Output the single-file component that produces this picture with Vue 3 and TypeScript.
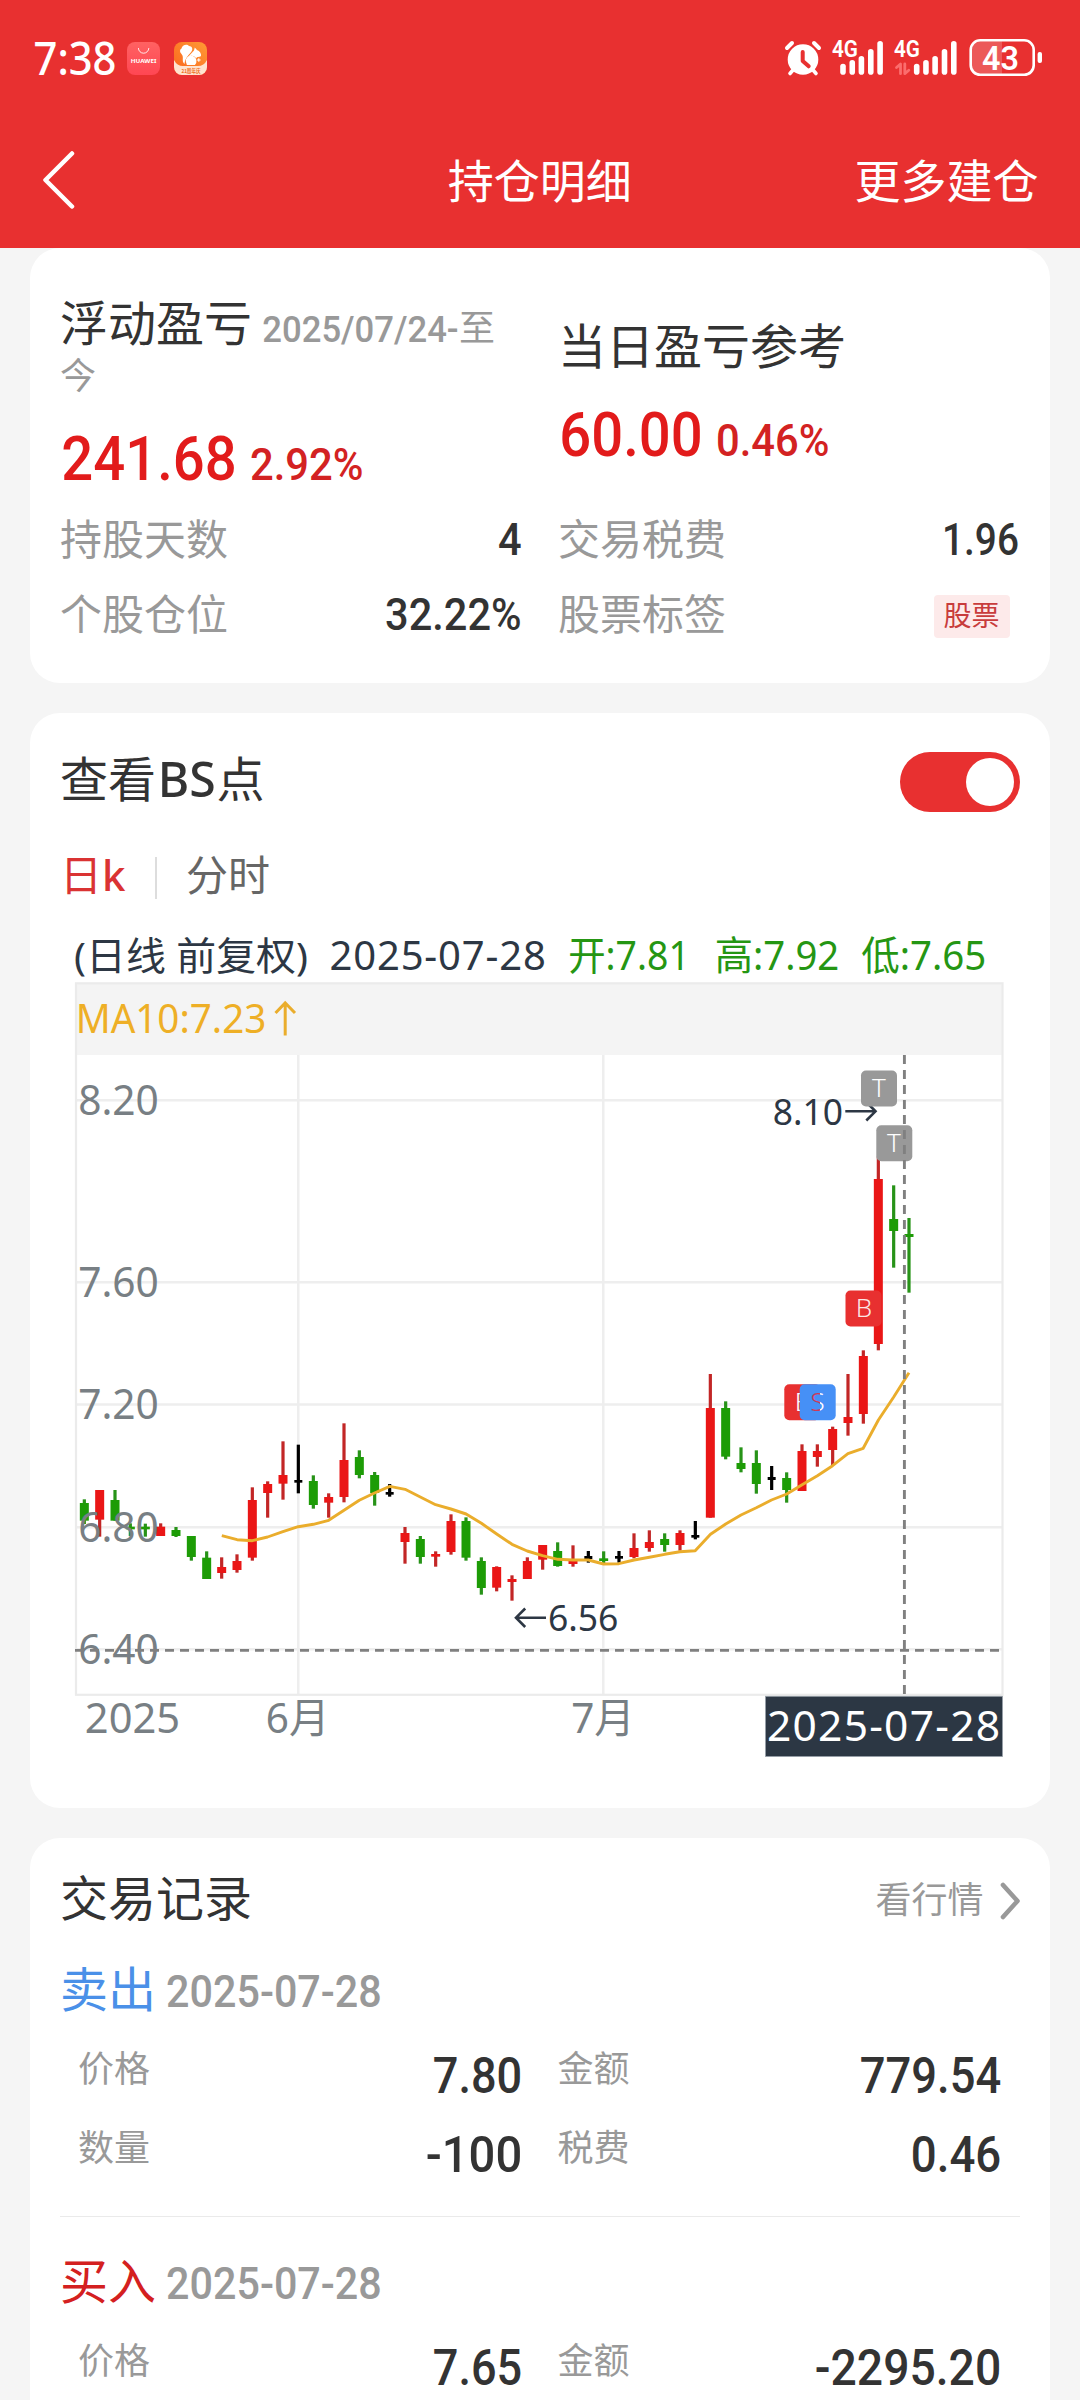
<script setup lang="ts">
import { h } from 'vue'
import type { FunctionalComponent } from 'vue'

interface FitProps {
  t: string
  w: number
  cap: number
  weight?: number
  family?: string
}

// Single-line text set to an exact ink width and cap height
const Fit: FunctionalComponent<FitProps> = (p) => {
  const size = p.cap / 0.711
  const b = size * 0.045
  return h(
    'svg',
    { width: p.w, height: p.cap, style: 'display:block;overflow:visible;flex:none' },
    [
      h(
        'text',
        {
          x: -b,
          y: p.cap,
          textLength: p.w + b * 2,
          lengthAdjust: 'spacingAndGlyphs',
          fill: 'currentColor',
          'font-size': size,
          'font-weight': p.weight ?? 500,
          'font-family': p.family ?? 'Roboto, "Noto Sans", sans-serif',
        },
        p.t,
      ),
    ],
  )
}
Fit.props = ['t', 'w', 'cap', 'weight', 'family']

const NOTO = '"Noto Sans", "Noto Sans CJK SC", sans-serif'

type Tone = 'r' | 'g' | 'k'
const tones: Record<Tone, { body: string; wick: string }> = {
  r: { body: '#ea1616', wick: '#c22626' },
  g: { body: '#1d9c06', wick: '#279318' },
  k: { body: '#000', wick: '#000' },
}

// [tone, high, body top, body bottom, low] in thirds of a pixel from y = 1400
const raw: [Tone, number, number, number, number][] = [
  ['g', 298, 309, 362, 372], ['r', 270, 270, 359, 410], ['g', 270, 300, 362, 362],
  ['g', 370, 380, 388, 408], ['g', 371, 380, 388, 410], ['r', 370, 380, 408, 408],
  ['g', 381, 390, 408, 411], ['g', 408, 408, 471, 482], ['g', 454, 473, 537, 537],
  ['r', 472, 501, 519, 536], ['r', 463, 483, 510, 518], ['r', 262, 300, 473, 482],
  ['r', 244, 252, 279, 353], ['r', 124, 225, 251, 299], ['k', 134, 240, 248, 280],
  ['g', 226, 243, 315, 326], ['r', 280, 291, 308, 353], ['r', 70, 180, 291, 307],
  ['g', 151, 171, 225, 235], ['g', 216, 225, 279, 317], ['k', 252, 276, 284, 290],
  ['r', 381, 399, 426, 491], ['g', 408, 417, 471, 491], ['r', 454, 462, 470, 500],
  ['r', 343, 363, 456, 464], ['g', 352, 363, 473, 482], ['g', 472, 483, 564, 584],
  ['r', 499, 501, 563, 574], ['r', 526, 537, 546, 602], ['r', 472, 483, 537, 537],
  ['r', 435, 435, 479, 509], ['g', 427, 453, 498, 500], ['r', 436, 479, 492, 500],
  ['k', 453, 468, 477, 488], ['g', 454, 475, 483, 490], ['k', 453, 468, 476, 488],
  ['r', 400, 444, 471, 475], ['r', 391, 426, 444, 455], ['g', 400, 417, 435, 455],
  ['r', 391, 399, 435, 452], ['k', 363, 405, 413, 418], ['r', -78, 24, 353, 353],
  ['g', 4, 24, 170, 178], ['g', 142, 189, 207, 217], ['g', 151, 189, 252, 281],
  ['k', 198, 231, 240, 270], ['g', 217, 234, 270, 308], ['r', 133, 153, 273, 273],
  ['r', 133, 153, 171, 200], ['r', 80, 87, 150, 195], ['r', -78, 51, 69, 107],
  ['r', -149, -132, 42, 71], ['r', -730, -663, -168, -149], ['g', -644, -543, -507, -397],
  ['g', -546, -498, -489, -322],
]
const xAt = (i: number) => 84.4 + i * 15.27
const yAt = (v: number) => 1400 + v / 3
const candles = raw.map(([tone, hi, top, bot, lo], i) => ({
  x: Math.round(xAt(i) * 3) / 3,
  hi: yAt(hi),
  top: yAt(top),
  bot: yAt(bot),
  lo: yAt(lo),
  bw: tone === 'k' ? 8 : 9,
  ...tones[tone],
}))

const ma = [
  407, 419, 422, 411, 395, 380, 373, 361, 331, 301, 279, 259, 268, 291, 314, 327, 342, 370, 402,
  433, 453, 467, 478, 480, 480, 492, 491, 480, 472, 463, 455, 452, 403, 372, 345, 323, 300, 282,
  254, 227, 197, 161, 145, 60, -9, -82,
]
const maPoints = ma.map((v, i) => `${xAt(i + 9).toFixed(1)},${yAt(v).toFixed(1)}`).join(' ')

const gridY = [1100.3, 1282.3, 1404.5, 1527.3, 1649.3]

interface Label {
  t: string
  x: number
  y: number
  w: number
  size: number
  fill: string
  pad?: number
  adjust?: 'spacing'
}
const ink = '#2d3744'
const green = '#259613'
const grey = '#787f84'
const labels: Label[] = [
  { t: '(日线 前复权)', x: 77, y: 970, w: 228, size: 39, fill: ink, pad: 3 },
  { t: '2025-07-28', x: 331.3, y: 970, w: 212.7, size: 40, fill: ink, adjust: 'spacing' },
  { t: '开:7.81', x: 570, y: 970, w: 118, size: 40, fill: green },
  { t: '高:7.92', x: 716.5, y: 970, w: 121, size: 40, fill: green },
  { t: '低:7.65', x: 863, y: 970, w: 121.5, size: 40, fill: green },
  { t: 'MA10:7.23', x: 77.5, y: 1033, w: 187, size: 40.5, fill: '#eeaf26' },
  { t: '8.20', x: 80, y: 1114.6, w: 77, size: 41, fill: grey },
  { t: '7.60', x: 80, y: 1297.2, w: 77, size: 41, fill: grey },
  { t: '7.20', x: 80, y: 1419.4, w: 77, size: 41, fill: grey },
  { t: '6.80', x: 80, y: 1541.8, w: 77, size: 41, fill: grey },
  { t: '6.40', x: 80, y: 1664, w: 77, size: 41, fill: grey },
  { t: '2025', x: 86.7, y: 1732.7, w: 91.6, size: 41, fill: grey },
  { t: '6月', x: 267.7, y: 1732.7, w: 60, size: 41, fill: grey },
  { t: '7月', x: 573, y: 1732.7, w: 60, size: 41, fill: grey },
  { t: '8.10', x: 774.3, y: 1125, w: 67, size: 36, fill: ink },
  { t: '6.56', x: 549.5, y: 1630.6, w: 67.3, size: 36, fill: ink },
]
const padOf = (l: Label) => l.pad ?? l.size * 0.045

const bars = [
  { x: 0, y: 63.7 },
  { x: 9.25, y: 60 },
  { x: 18.4, y: 56 },
  { x: 27.8, y: 49 },
  { x: 37.1, y: 41 },
]

interface Cell {
  k: string
  v: string
  w: number
}
interface Trade {
  side: string
  buy: boolean
  date: string
  rows: [Cell, Cell][]
}
const trades: Trade[] = [
  {
    side: '卖出',
    buy: false,
    date: '2025-07-28',
    rows: [
      [{ k: '价格', v: '7.80', w: 85 }, { k: '金额', v: '779.54', w: 137 }],
      [{ k: '数量', v: '-100', w: 92 }, { k: '税费', v: '0.46', w: 86 }],
    ],
  },
  {
    side: '买入',
    buy: true,
    date: '2025-07-28',
    rows: [[{ k: '价格', v: '7.65', w: 85 }, { k: '金额', v: '-2295.20', w: 182 }]],
  },
]
</script>

<template>
  <div class="page">
    <header class="top">
      <svg class="status" width="1080" height="110" viewBox="0 0 1080 110">
        <defs>
          <linearGradient id="store" x1="0" y1="0" x2="0" y2="1">
            <stop offset="0" stop-color="#ff6262" />
            <stop offset="1" stop-color="#ff4653" />
          </linearGradient>
          <linearGradient id="uc" x1="1" y1="0" x2="0" y2="1">
            <stop offset="0" stop-color="#ff9a35" />
            <stop offset="1" stop-color="#fb641c" />
          </linearGradient>
          <clipPath id="ucBox"><rect x="174" y="42" width="33" height="33" rx="8" /></clipPath>
          <clipPath id="cell"><rect x="971.5" y="41" width="30.5" height="33" /></clipPath>
        </defs>
        <text x="33.5" y="75" textLength="83" lengthAdjust="spacingAndGlyphs" class="clock">7:38</text>

        <rect x="127" y="42" width="33" height="33" rx="8" fill="url(#store)" />
        <path d="M138.4 48a5.2 5.2 0 0 0 10.4 0" fill="none" stroke="#fff" stroke-opacity=".85" stroke-width="1" />
        <text x="130.8" y="63" textLength="25.6" lengthAdjust="spacingAndGlyphs" class="brand">HUAWEI</text>

        <g clip-path="url(#ucBox)">
          <rect x="174" y="42" width="33" height="33" fill="url(#uc)" />
          <path d="M174 60q3 6 9 6h15q6 0 9-6v15h-33z" fill="#ffe3cf" />
          <path
            d="M184.500 64C181 61 184.500 57 181.500 54C179.500 52 179.500 49.500 181.500 48.500C182 45 187 43.500 189 46C192 46 193.200 49 191.500 51.500C189 54.500 185 58 184.500 64Z"
            fill="#fff"
          />
          <path
            d="M186.500 58.500L194 50.500L194.800 47.500L197 50C199.800 51 201.500 53.500 201 56C199 57.500 197.500 56 196 58.500C194.500 55 189.500 54.500 186.500 58.500Z"
            fill="#fff"
          />
          <path d="M185.800 61.500a5.300 5.300 0 0 1 10.600-1a5 5 0 0 1-1.500 4.500h-8z" fill="#fff" />
          <path d="M197 60h3.600M198.800 58.200v3.600" stroke="#fff" stroke-width="1.100" />
          <text x="181.500" y="72.600" textLength="19" lengthAdjust="spacingAndGlyphs" class="uc">21周年庆</text>
        </g>

        <g stroke="#fff" stroke-linecap="round" fill="none">
          <circle cx="803" cy="59.500" r="15.300" fill="#fff" stroke="none" />
          <path d="M787 48l5-5M819 48l-5-5" stroke-width="4" />
          <path d="M793 70l-3 3.500M813 70l3 3.500" stroke-width="3.600" />
          <path d="M802.700 52v9l6 5.300" stroke="#e83030" stroke-width="4" stroke-linejoin="round" />
        </g>

        <g fill="#fff">
          <text x="832" y="57" textLength="26" lengthAdjust="spacingAndGlyphs" class="net">4G</text>
          <text x="894" y="57" textLength="26" lengthAdjust="spacingAndGlyphs" class="net">4G</text>
          <rect v-for="b in bars" :key="b.x" :x="840.2 + b.x" :y="b.y" width="5.6" :height="74.700 - b.y" rx="2.8" />
          <rect v-for="b in bars" :key="b.x" :x="913.900 + b.x" :y="b.y" width="5.6" :height="74.700 - b.y" rx="2.8" />
        </g>
        <path
          d="M896.500 67.500l4-3.500v9.700M904.800 64v9.700l4-3.500"
          fill="none"
          stroke="#fb6d6d"
          stroke-width="2.800"
          stroke-linejoin="round"
          stroke-linecap="round"
        />

        <rect x="971.500" y="41.300" width="61" height="32.500" rx="8" fill="#fff" fill-opacity=".2" clip-path="url(#cell)" />
        <rect x="970.700" y="40.300" width="63" height="34.500" rx="9.500" fill="none" stroke="#fff" stroke-width="2.600" />
        <rect x="1037.600" y="52" width="4.400" height="11" rx="2" fill="#fff" />
        <text x="982" y="69.600" textLength="37" lengthAdjust="spacingAndGlyphs" class="level">43</text>
      </svg>
      <nav class="nav">
        <div class="nav-side">
          <svg width="34" height="60" viewBox="0 0 34 60">
            <path
              d="M31 3.500L4.500 30L31 56.500"
              fill="none"
              stroke="#fff"
              stroke-width="4.500"
              stroke-linecap="round"
              stroke-linejoin="round"
            />
          </svg>
        </div>
        <h1>持仓明细</h1>
        <div class="nav-side end">更多建仓</div>
      </nav>
    </header>

    <section class="card summary">
      <div class="heads">
        <div class="head left">
          <div class="line">
            <span class="h">浮动盈亏</span>
            <Fit class="date" t="2025/07/24-" :w="193" :cap="25.7" />
            <span class="sm">至</span>
          </div>
          <div class="sm wrap">今</div>
          <div class="line nums">
            <Fit class="big" t="241.68" :w="170" :cap="43" />
            <Fit class="pct" t="2.92%" :w="109.500" :cap="31" />
          </div>
        </div>
        <div class="head right">
          <div class="line"><span class="h">当日盈亏参考</span></div>
          <div class="line nums">
            <Fit class="big" t="60.00" :w="138" :cap="43" />
            <Fit class="pct" t="0.46%" :w="109.500" :cap="31" />
          </div>
        </div>
      </div>
      <div class="stats">
        <div class="stat"><span>持股天数</span><Fit class="val" t="4" :w="19.700" :cap="31" /></div>
        <div class="stat"><span>交易税费</span><Fit class="val" t="1.96" :w="73" :cap="31" /></div>
        <div class="stat"><span>个股仓位</span><Fit class="val" t="32.22%" :w="132.600" :cap="31" /></div>
        <div class="stat"><span>股票标签</span><em>股票</em></div>
      </div>
    </section>

    <section class="card chart-card">
      <div class="bs">
        <div class="line">
          <span class="h">查看</span>
          <Fit class="lat" t="BS" :w="53.500" :cap="35" :family="NOTO" />
          <span class="h">点</span>
        </div>
        <div class="toggle"><i></i></div>
      </div>
      <div class="tabs">
        <span class="on">日<b>k</b></span>
        <i></i>
        <span>分时</span>
      </div>

      <svg class="chart" width="960" height="850" viewBox="60 920 960 850">
        <defs>
          <linearGradient id="sFill" gradientUnits="userSpaceOnUse" x1="0" y1="0" x2="1080" y2="0">
            <stop offset=".7595" stop-color="#d03858" />
            <stop offset=".7595" stop-color="#fff" />
          </linearGradient>
        </defs>
        <rect x="76" y="983" width="926" height="72" fill="#f4f4f4" />
        <g stroke="#eee" stroke-width="2.500" fill="none">
          <path v-for="y in gridY" :key="y" :d="`M76 ${y}H1002`" />
          <path d="M298.300 1055V1694M603.300 1055V1694" />
          <rect x="76" y="983.300" width="926.500" height="711.500" stroke="#ebebeb" stroke-width="2.200" />
        </g>

        <g v-for="c in candles" :key="c.x">
          <rect :x="c.x - 1.6" :y="c.hi" width="3.2" :height="c.lo - c.hi" :fill="c.wick" />
          <rect :x="c.x - c.bw / 2" :y="c.top" :width="c.bw" :height="c.bot - c.top" :fill="c.body" />
        </g>
        <polyline :points="maPoints" fill="none" stroke="#eaad2c" stroke-width="2.900" stroke-linejoin="round" />

        <text
          v-for="l in labels"
          :key="l.t + l.x"
          :x="l.x - padOf(l)"
          :y="l.y"
          :textLength="l.w + padOf(l) * 2"
          :lengthAdjust="l.adjust ?? 'spacingAndGlyphs'"
          :font-size="l.size"
          :fill="l.fill"
        >{{ l.t }}</text>

        <g fill="none" stroke-width="2.600">
          <path d="M285.200 1035.500V1003M275.500 1013L285.200 1003L295 1013" stroke="#eaad2c" stroke-width="3" />
          <path d="M845.300 1111.300H875.500M866.300 1102L875.500 1111.300L866.300 1120.500" stroke="#2d3744" />
          <path d="M546 1617.700H516M525.200 1608.500L516 1617.700L525.200 1627" stroke="#2d3744" />
        </g>

        <g class="mark">
          <rect x="861" y="1070.500" width="36" height="36" rx="5" fill="#999" />
          <text x="879" y="1097.300">T</text>
          <rect x="876.300" y="1125.300" width="36" height="36" rx="5" fill="#999" />
          <text x="894" y="1152.300">T</text>
          <rect x="845.500" y="1290.500" width="36" height="36" rx="5" fill="#e83030" />
          <text x="864" y="1317" fill-opacity=".88">B</text>
          <rect x="784.300" y="1384.300" width="36" height="36" rx="5" fill="#e83030" />
          <text x="803" y="1411">B</text>
          <rect x="799.700" y="1384.300" width="36" height="36" rx="5" fill="#4690f6" />
          <text x="817.600" y="1411" style="fill: url(#sFill)">S</text>
        </g>

        <g stroke="#808080" stroke-width="2.900" stroke-dasharray="9 6">
          <path d="M75 1650.400H1002" />
          <path d="M904.400 1055V1694" />
        </g>

        <rect x="765.500" y="1696.300" width="237" height="60.200" fill="#2c3744" stroke="#97a0a8" stroke-width=".8" />
        <text x="767" y="1740.900" textLength="233" lengthAdjust="spacing" font-size="42.500" fill="#fff">2025-07-28</text>
      </svg>
    </section>

    <section class="card records">
      <div class="rec-head">
        <span class="h">交易记录</span>
        <a>
          看行情
          <svg width="20" height="38" viewBox="0 0 20 38">
            <path d="M3 3L17.500 19L3 35" fill="none" stroke="#999" stroke-width="4.600" stroke-linecap="round" stroke-linejoin="round" />
          </svg>
        </a>
      </div>
      <article v-for="r in trades" :key="r.side">
        <div class="line">
          <span class="h" :class="r.buy ? 'buy' : 'sell'">{{ r.side }}</span>
          <Fit class="rdate" :t="r.date" :w="211.800" :cap="31" />
        </div>
        <div v-for="row in r.rows" :key="row[0].k" class="row">
          <div v-for="c in row" :key="c.k" class="cell">
            <span>{{ c.k }}</span>
            <Fit class="val" :t="c.v" :w="c.w" :cap="35" />
          </div>
        </div>
      </article>
    </section>
  </div>
</template>

<style>
body {
  margin: 0;
}
</style>

<style scoped>
.page {
  width: 1080px;
  height: 2400px;
  overflow: hidden;
  display: flex;
  flex-direction: column;
  background: #f5f5f5;
  font-family: 'Noto Sans CJK SC', 'Noto Sans', sans-serif;
  font-size: 42px;
  line-height: 1;
  color: #333;
}
.top {
  flex: none;
  height: 248px;
  background: #e83030;
  color: #fff;
}
.status {
  display: block;
}
.clock {
  font: 500 45.500px 'Noto Sans', sans-serif;
  fill: #fff;
}
.brand {
  font: 700 5.6px 'Noto Sans', sans-serif;
  fill: #fff;
}
.uc {
  font: 700 5.4px 'Noto Sans CJK SC', sans-serif;
  fill: #f0701e;
}
.net {
  font: 600 23px Roboto, sans-serif;
}
.level {
  font: 600 33px Roboto, sans-serif;
  fill: #fff;
}
.nav {
  display: flex;
  align-items: center;
  height: 136px;
  padding: 0 41.500px 0 41px;
}
.nav-side {
  flex: 1;
  height: 60px;
  margin-top: 4px;
}
.nav-side svg {
  display: block;
}
.nav-side.end {
  height: auto;
  margin-top: 0;
  text-align: right;
  font-size: 46px;
}
h1 {
  margin: 0;
  font-size: 46px;
  font-weight: 400;
}
.card {
  flex: none;
  box-sizing: border-box;
  margin: 0 30px 30px;
  padding: 0 30px;
  border-radius: 30px;
  background: #fff;
}
.h {
  font-size: 48px;
}
.line {
  display: flex;
  align-items: baseline;
  height: 48px;
}
.sm {
  font-size: 36px;
  color: #999;
}
.summary {
  height: 435px;
}
.heads {
  display: flex;
  gap: 37px;
  height: 267.6px;
}
.head.left {
  width: 461px;
  box-sizing: border-box;
  padding-top: 48.3px;
}
.head.right {
  padding-top: 71.3px;
}
.date {
  margin: 0 2px 0 12px;
  color: #999;
}
.wrap {
  margin-top: 11.2px;
}
.nums {
  height: 43px;
  margin-top: 45.5px;
  color: #e21b1b;
}
.big {
  margin-left: 3.500px;
}
.pct {
  margin-left: 18px;
  color: #d32222;
}
.stats {
  display: grid;
  grid-template-columns: 460px 461px;
  gap: 33px 38px;
}
.stat {
  display: flex;
  justify-content: space-between;
  align-items: baseline;
  height: 42px;
  color: #999;
}
.val {
  color: #333;
}
.stat:nth-child(even) .val {
  margin-right: 2px;
}
.stat em {
  align-self: flex-start;
  flex: none;
  box-sizing: border-box;
  width: 76px;
  height: 43px;
  margin: 4.700px 9.500px 0 0;
  padding-top: 4.600px;
  border-radius: 4px;
  background: #fdeaea;
  color: #c83c3c;
  font-style: normal;
  font-size: 28px;
  text-align: center;
}
.chart-card {
  height: 1095px;
  padding-top: 39px;
}
.bs {
  display: flex;
  justify-content: space-between;
  height: 60px;
}
.lat {
  margin: 0 3px 0 4px;
}
.toggle {
  display: flex;
  justify-content: flex-end;
  box-sizing: border-box;
  width: 120px;
  height: 60px;
  padding: 6px;
  border-radius: 30px;
  background: #e83030;
}
.toggle i {
  width: 48px;
  height: 48px;
  border-radius: 50%;
  background: #fff;
}
.tabs {
  display: flex;
  height: 42px;
  margin-top: 39.700px;
  color: #666;
  white-space: nowrap;
}
.tabs .on {
  width: 65px;
  color: #da3333;
}
.tabs b {
  font: 500 42px/1 'Noto Sans', sans-serif;
}
.tabs i {
  width: 2px;
  height: 42px;
  margin: 5.300px 29px 0 30px;
  background: #ddd;
}
.chart {
  display: block;
  margin-top: 26.300px;
  font-family: 'Noto Sans', 'Noto Sans CJK SC', sans-serif;
}
.mark text {
  font: 300 26px 'Noto Sans', sans-serif;
  fill: #fff;
  text-anchor: middle;
}
.records {
  flex: 1;
  margin-bottom: 0;
  padding-top: 33.300px;
  border-radius: 30px 30px 0 0;
}
.rec-head {
  display: flex;
  justify-content: space-between;
  height: 48px;
}
.rec-head a {
  display: flex;
  align-items: flex-start;
  gap: 16.500px;
  padding-top: 8.200px;
  font-size: 36px;
  color: #999;
}
.rec-head a svg {
  margin-top: 3px;
}
article {
  height: 254px;
  padding-top: 43px;
  border-bottom: 1px solid #eaeaea;
}
article + article {
  padding-top: 37px;
  border: 0;
}
.sell {
  color: #4a90e8;
}
.buy {
  color: #d42020;
}
.rdate {
  margin-left: 11.500px;
  color: #999;
}
.row {
  display: flex;
  gap: 38px;
  height: 45px;
  margin-top: 33.500px;
  padding: 0 19px 0 18px;
}
.line + .row {
  margin-top: 38px;
}
.cell {
  display: flex;
  flex: none;
  width: 441.500px;
  justify-content: space-between;
  align-items: flex-end;
}
.cell span {
  align-self: flex-start;
  font-size: 36px;
  color: #999;
}
</style>
